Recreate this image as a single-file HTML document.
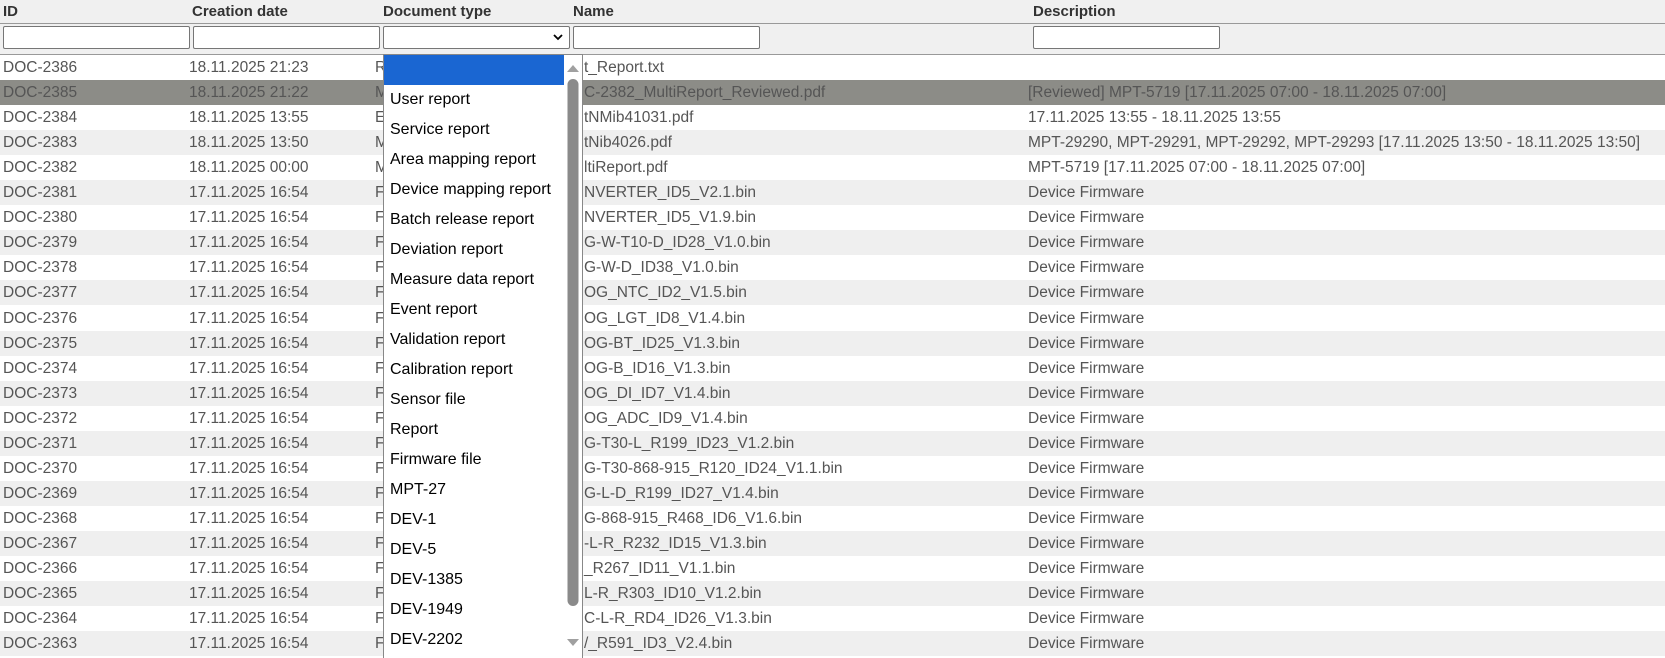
<!DOCTYPE html>
<html><head><meta charset="utf-8"><style>
body{margin:0;width:1665px;height:658px;overflow:hidden;background:#fff;font-family:"Liberation Sans",sans-serif;position:relative}
.hd{position:absolute;left:0;top:0;width:1665px;height:54px;background:#f0f0f0}
.l{position:absolute;left:0;width:1665px;height:1px;background:#999}
.h{position:absolute;top:3px;font-weight:bold;font-size:15px;color:#333}
.in{position:absolute;top:26px;height:23px;background:#fff;border:1px solid #767676;border-radius:2px;box-sizing:border-box}
.r{position:absolute;left:0;width:1665px;height:25px;font-size:15.5px;color:#555;line-height:25px;white-space:nowrap}
.r span{position:absolute;top:0}
.g{background:#efefef}
.s{background:#8c8c87}
.dd{position:absolute;left:383px;top:54px;width:200px;height:604px;background:#fff;border:1px solid #888;border-bottom:none;box-sizing:border-box;overflow:hidden}
.it{height:30px;line-height:30px;padding-left:6px;font-size:16px;color:#000;width:174px}
</style></head><body>
<div class="hd"></div>
<div class="l" style="top:23px"></div>
<div class="l" style="top:54px"></div>
<div class="h" style="left:3px">ID</div>
<div class="h" style="left:192px">Creation date</div>
<div class="h" style="left:383px">Document type</div>
<div class="h" style="left:573px">Name</div>
<div class="h" style="left:1033px">Description</div>
<div class="in" style="left:3px;width:187px"></div>
<div class="in" style="left:193px;width:187px"></div>
<div class="in" style="left:383px;width:187px"><svg style="position:absolute;right:6px;top:7px" width="10" height="7"><path d="M1 1L5 5L9 1" stroke="#000" stroke-width="1.8" fill="none"/></svg></div>
<div class="in" style="left:573px;width:187px"></div>
<div class="in" style="left:1033px;width:187px"></div>
<div id="rows"></div>
<div class="dd">
<div style="height:30px;background:#1a66d2;width:180px"></div>
<div class="it">User report</div><div class="it">Service report</div><div class="it">Area mapping report</div><div class="it">Device mapping report</div><div class="it">Batch release report</div><div class="it">Deviation report</div><div class="it">Measure data report</div><div class="it">Event report</div><div class="it">Validation report</div><div class="it">Calibration report</div><div class="it">Sensor file</div><div class="it">Report</div><div class="it">Firmware file</div><div class="it">MPT-27</div><div class="it">DEV-1</div><div class="it">DEV-5</div><div class="it">DEV-1385</div><div class="it">DEV-1949</div><div class="it">DEV-2202</div>
<svg style="position:absolute;left:182px;top:6px" width="14" height="600">
<path d="M1 11L7 4L13 11Z" fill="#a0a0a0"/>
<rect x="1.5" y="18" width="11" height="527" rx="5.5" fill="#8a8a8a"/>
<path d="M1 578L7 585L13 578Z" fill="#a0a0a0"/>
</svg>
</div>
<script>
var d=[
["DOC-2386","18.11.2025 21:23","R","t_Report.txt",""],
["DOC-2385","18.11.2025 21:22","M","C-2382_MultiReport_Reviewed.pdf","[Reviewed] MPT-5719 [17.11.2025 07:00 - 18.11.2025 07:00]"],
["DOC-2384","18.11.2025 13:55","E","tNMib41031.pdf","17.11.2025 13:55 - 18.11.2025 13:55"],
["DOC-2383","18.11.2025 13:50","M","tNib4026.pdf","MPT-29290, MPT-29291, MPT-29292, MPT-29293 [17.11.2025 13:50 - 18.11.2025 13:50]"],
["DOC-2382","18.11.2025 00:00","M","ltiReport.pdf","MPT-5719 [17.11.2025 07:00 - 18.11.2025 07:00]"],
["DOC-2381","","F","NVERTER_ID5_V2.1.bin"],["DOC-2380","","F","NVERTER_ID5_V1.9.bin"],
["DOC-2379","","F","G-W-T10-D_ID28_V1.0.bin"],["DOC-2378","","F","G-W-D_ID38_V1.0.bin"],
["DOC-2377","","F","OG_NTC_ID2_V1.5.bin"],["DOC-2376","","F","OG_LGT_ID8_V1.4.bin"],
["DOC-2375","","F","OG-BT_ID25_V1.3.bin"],["DOC-2374","","F","OG-B_ID16_V1.3.bin"],
["DOC-2373","","F","OG_DI_ID7_V1.4.bin"],["DOC-2372","","F","OG_ADC_ID9_V1.4.bin"],
["DOC-2371","","F","G-T30-L_R199_ID23_V1.2.bin"],["DOC-2370","","F","G-T30-868-915_R120_ID24_V1.1.bin"],
["DOC-2369","","F","G-L-D_R199_ID27_V1.4.bin"],["DOC-2368","","F","G-868-915_R468_ID6_V1.6.bin"],
["DOC-2367","","F","-L-R_R232_ID15_V1.3.bin"],["DOC-2366","","F","_R267_ID11_V1.1.bin"],
["DOC-2365","","F","L-R_R303_ID10_V1.2.bin"],["DOC-2364","","F","C-L-R_RD4_ID26_V1.3.bin"],
["DOC-2363","","F","/_R591_ID3_V2.4.bin"]];
var h="";
d.forEach(function(r,i){
var c=i==1?"s":(i%2?"g":"");
var dt=r[1]||"17.11.2025 16:54",de=r.length>4?r[4]:"Device Firmware";
h+='<div class="r '+c+'" style="top:'+(55+i*25.05)+'px"><span style="left:3px">'+r[0]+'</span><span style="left:189px">'+dt+'</span><span style="left:375px">'+r[2]+'</span><span style="left:584px">'+r[3]+'</span><span style="left:1028px">'+de+'</span></div>';
});
document.getElementById("rows").innerHTML=h;
</script>
</body></html>
